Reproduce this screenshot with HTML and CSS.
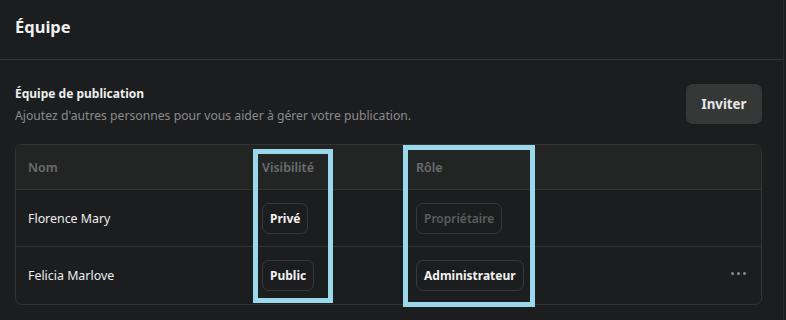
FILE: index.html
```html
<!DOCTYPE html>
<html lang="fr">
<head>
<meta charset="utf-8">
<link rel="stylesheet" href="styles.css">
</head>
<body>
<div class="page">
  <header class="top">
    <h1 class="title">Équipe</h1>
  </header>
  <section class="section">
    <div class="section-head">
      <div class="section-text">
        <h2 class="section-title">Équipe de publication</h2>
        <p class="section-sub">Ajoutez d'autres personnes pour vous aider à gérer votre publication.</p>
      </div>
      <button class="btn">Inviter</button>
    </div>
    <div class="table">
      <div class="row head">
        <div class="cell">Nom</div>
        <div class="cell">Visibilité</div>
        <div class="cell">Rôle</div>
        <div class="cell"></div>
      </div>
      <div class="row">
        <div class="cell name">Florence Mary</div>
        <div class="cell"><span class="badge">Privé</span></div>
        <div class="cell"><span class="badge disabled">Propriétaire</span></div>
        <div class="cell"></div>
      </div>
      <div class="row last">
        <div class="cell name">Felicia Marlove</div>
        <div class="cell"><span class="badge">Public</span></div>
        <div class="cell"><span class="badge">Administrateur</span></div>
        <div class="cell more"><span class="dot"></span><span class="dot"></span><span class="dot"></span></div>
      </div>
    </div>
  </section>
  <div class="hl hl-vis"></div>
  <div class="hl hl-role"></div>
</div>
</body>
</html>
```
FILE: styles.css
```css
* { box-sizing: border-box; }
html, body { margin: 0; padding: 0; }
body {
  background: #1c1d1f;
  font-family: "Noto Sans", "Open Sans", sans-serif;
  color: #ececec;
  width: 786px;
  height: 320px;
  overflow: hidden;
}
.page {
  position: relative;
  width: 784px;
  height: 320px;
  border-right: 1px solid #2c2d2f;
}
.top {
  height: 60px;
  border-bottom: 1px solid #343536;
  display: flex;
  align-items: center;
  padding: 0 15px 6px;
}
.title {
  margin: 0;
  font-size: 16.5px;
  font-weight: 700;
  color: #f0f0f0;
}
.section {
  padding: 24px 21px 0 15px;
}
.section-head {
  display: flex;
  justify-content: space-between;
  align-items: flex-start;
  height: 40px;
}
.section-text { padding-top: 2px; }
.section-title {
  margin: 0;
  font-size: 12px;
  font-weight: 700;
  color: #eeeeee;
  line-height: 16px;
}
.section-sub {
  margin: 5px 0 0;
  font-size: 12.2px;
  color: #8a8b8c;
  line-height: 18px;
}
.btn {
  width: 76px;
  height: 40px;
  border: none;
  border-radius: 7px;
  background: #363737;
  color: #e8e8e8;
  font-family: inherit;
  font-size: 13.3px;
  font-weight: 700;
}
.table {
  margin-top: 20px;
  border: 1px solid #333435;
  border-radius: 7px;
  overflow: hidden;
}
.row {
  display: grid;
  grid-template-columns: 234px 154px 1fr 60px;
  height: 57px;
  align-items: center;
  border-bottom: 1px solid #313233;
}
.row.last { border-bottom: none; height: 57px; }
.row.head {
  height: 45px;
  background: #232524;
  color: #6c6d6d;
  font-weight: 600;
}
.cell {
  padding-left: 12px;
  font-size: 12.4px;
}
.row.head .cell { font-size: 12.5px; }
.name { color: #ededed; }
.badge {
  display: inline-flex;
  align-items: center;
  height: 31px;
  padding: 0 7px;
  border: 1px solid #37383a;
  border-radius: 7px;
  font-weight: 700;
  font-size: 12px;
  color: #f2f2f2;
}
.badge.disabled {
  color: #5c5d5e;
  font-weight: 600;
}
.more {
  display: flex;
  justify-content: flex-end;
  gap: 2.5px;
  padding-right: 15px;
  padding-bottom: 4px;
}
.dot {
  width: 3.5px;
  height: 3.5px;
  border-radius: 50%;
  background: #8a8b8c;
}
.hl {
  position: absolute;
  border: 5px solid #9ad9eb;
  pointer-events: none;
}
.hl-vis { left: 253px; top: 149px; width: 80px; height: 154px; }
.hl-role { left: 403px; top: 145px; width: 132px; height: 162px; }
```
